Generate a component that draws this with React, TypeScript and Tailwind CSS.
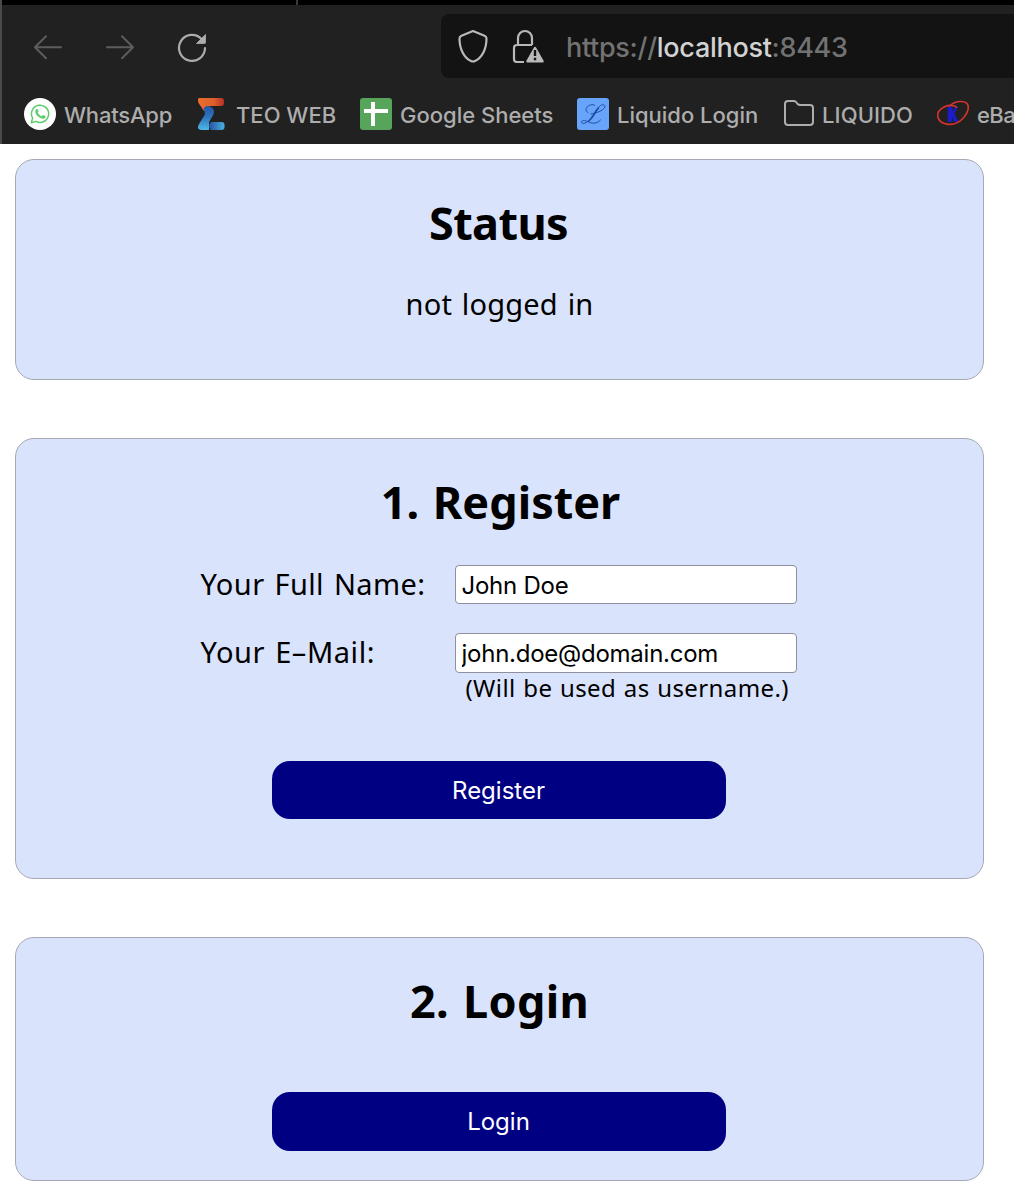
import type { ReactNode } from "react";

function Bookmark({ icon, label, width }: { icon: ReactNode; label: ReactNode; width: string }) {
  return (
    <div className="flex shrink-0 items-center gap-2">
      <div className="h-8 w-8 shrink-0">{icon}</div>
      <span className={`whitespace-nowrap pt-0.5 leading-8 ${width}`}>{label}</span>
    </div>
  );
}

function WhatsAppIcon() {
  return (
    <svg width="32" height="32" viewBox="0 0 32 32" fill="none">
      <circle cx="16" cy="16" r="16" fill="#fff" />
      <path d="M7.3 24.7l1.3-4.6a8.6 8.6 0 1 1 3.4 3.3z" stroke="#5ccb6c" strokeWidth="1.5" strokeLinejoin="round" />
      <path d="M12.2 11.3c.5-.5 1.100-.5 1.400 0l.9 1.900c.1.5-.8 1.200-.7 1.600 1 1.900 2.200 2.900 4 3.500.5 0 1.100-1.300 1.600-1.200l2 1c.4.3 0 1.700-.6 2.100-1.500 1-3.500.6-5.700-.9-1.700-1.200-3.200-3-3.600-4.600-.3-1.300 0-2.600.7-3.400z" fill="#5ccb6c" />
    </svg>
  );
}

function TeoIcon() {
  return (
    <svg width="32" height="32" viewBox="0 0 32 32">
      <defs>
        <linearGradient id="teoTop" x1="0" x2="1">
          <stop offset="0" stopColor="#ea6f2b" />
          <stop offset="0.6" stopColor="#dc602b" />
          <stop offset="1" stopColor="#b93028" />
        </linearGradient>
        <linearGradient id="teoMid" x1="0" x2="0" y1="0" y2="1">
          <stop offset="0" stopColor="#2453a5" />
          <stop offset="0.45" stopColor="#2e73bd" />
          <stop offset="1" stopColor="#4cb8e4" />
        </linearGradient>
        <linearGradient id="teoFoot" x1="0" x2="1">
          <stop offset="0" stopColor="#2552a2" />
          <stop offset="1" stopColor="#48b0df" />
        </linearGradient>
      </defs>
      <path d="M3.500 0H25a3 3 0 0 1 3 3v2a3 3 0 0 1-3 3H14L8 13 2.500 5Q1 0 3.500 0z" fill="url(#teoTop)" />
      <path d="M7.500 11q1-3 4.500-3 6 1 6 6 0 2-2 5l-3 5v8H5q-5-1-2-6l5-8q2-3-.5-7z" fill="url(#teoMid)" />
      <path d="M15 24h10.500a3 3 0 0 1 3 3v2a3 3 0 0 1-3 3H15q-4-4 0-8z" fill="url(#teoFoot)" />
    </svg>
  );
}

function SheetsIcon() {
  return (
    <svg width="32" height="32" viewBox="0 0 32 32">
      <rect width="32" height="32" rx="3" fill="#57a55a" />
      <path d="M11 4h4v7h13v4H15v13h-4V15H4v-4h7z" fill="#fff" />
    </svg>
  );
}

function LiquidoIcon() {
  return (
    <svg width="32" height="32" viewBox="0 0 32 32" fill="none" stroke="#1c4fa5" strokeLinecap="round">
      <rect width="32" height="32" rx="3" fill="#68a5fa" stroke="none" />
      <path d="M11 14.500C7 13 9 7.500 15 6.700c2-.2 3 .2 2.500 1.100M14 16c5-1 12-3 14-7 .5-2-2-3-4.500-1.500C18 11 16 20 10 24c-2.500 1.700-5.500 2-5.500.3 0-2 3-2.300 6-.8 4 2 9 3 13-1.500" strokeWidth="1" />
      <path d="M21.500 10C18 14 16 20 11.500 23.200" strokeWidth="1.600" />
    </svg>
  );
}

function FolderIcon() {
  return (
    <svg width="32" height="32" viewBox="0 0 32 32" fill="none" stroke="#adadad" strokeWidth="2">
      <path d="M3 24V6q0-3 3-3h6q1.500 0 2.500 1.500l1.200 1.500q1 1 2.300 1h10q3 0 3 3v14q0 3-3 3H6q-3 0-3-3z" />
    </svg>
  );
}

function KleinanzeigenIcon() {
  return (
    <svg width="32" height="32" viewBox="0 0 32 32" fill="none">
      <path d="M11 9h4v5.500L18.500 9h2l-3.200 6.500 3.700 8h-3.700L15 18v5.500h-4z" fill="#1c1cc8" stroke="#1c1cc8" strokeWidth=".6" />
      <path d="M12 8.500C19 1.500 31 2 31.300 9c.2 6-7.300 17.500-18.300 17.300C4 26.500 0 21 .7 16 1.500 11 9 7 14 7.500c3 0 5 .500 6 2.300" stroke="#d3342d" strokeWidth="1.700" />
    </svg>
  );
}

function BrowserChrome() {
  return (
    <header className="h-36 overflow-hidden border-l-2 border-[#4a4a4a] bg-[#212121] font-['Inter',sans-serif] font-[450]">
      <div className="flex h-[5px] bg-black">
        <div className="w-[294px]" />
        <div className="w-0.5 bg-[#3a3a3a]" />
      </div>
      <div className="mt-[9px] flex h-16">
        <div className="flex w-[439px] shrink-0 items-center pl-8">
          <svg width="30" height="30" viewBox="0 0 30 30" fill="none" stroke="#5d5d5d" strokeWidth="2" strokeLinecap="round" strokeLinejoin="round">
            <path d="M27 16.300H1.500M12 5.300L1 16.300l11 11" />
          </svg>
          <svg className="ml-[42px]" width="30" height="30" viewBox="0 0 30 30" fill="none" stroke="#5d5d5d" strokeWidth="2" strokeLinecap="round" strokeLinejoin="round">
            <path d="M1 16.300h25.500M16 5.300l11 11-11 11" />
          </svg>
          <svg className="ml-10" width="32" height="32" viewBox="0 0 32 32" fill="none">
            <path d="M29 18A13 13 0 1 1 25.500 9" stroke="#adadad" strokeWidth="2.200" strokeLinecap="round" />
            <path d="M29.500 4.500v8q0 1-1 1H20.500z" fill="#adadad" stroke="#adadad" strokeLinejoin="round" strokeWidth=".8" />
          </svg>
        </div>
        <div className="flex flex-1 items-center rounded-l-lg bg-[#131313] pl-4">
          <svg width="32" height="34" viewBox="0 0 32 34" fill="none" stroke="#b9b9b9" strokeWidth="2.200" strokeLinejoin="round">
            <path d="M16 2l11.500 4.700q2 .8 2 2.800C29.500 20 25 29 18 32q-2 1-4 0C7 29 2.500 20 2.500 9.500q0-2 2-2.800z" />
          </svg>
          <svg className="ml-[22px]" width="34" height="34" viewBox="0 0 34 34" fill="none">
            <path d="M7 16V9a7 7 0 0 1 14 0v7M21 16H6q-3 0-3 3v11q0 3 3 3h7" stroke="#b9b9b9" strokeWidth="2.200" />
            <path d="M24 19l7.500 13.300h-15z" fill="#b9b9b9" stroke="#b9b9b9" strokeWidth="2.500" strokeLinejoin="round" />
            <path d="M24 21v6M24 28.700v2.600" stroke="#131313" strokeWidth="2.400" />
          </svg>
          <div className="ml-[21px] whitespace-nowrap pt-1 text-[27px] leading-8 tracking-[-0.3px] text-[#727272]">
            https://<span className="text-[#d2d2d2]">localhost</span>:8443
          </div>
        </div>
      </div>
      <nav className="mt-[19px] flex gap-6 pl-[22px] text-[22px] text-[#adadad]">
        <Bookmark icon={<WhatsAppIcon />} label="WhatsApp" width="w-[108px] tracking-[-0.2px]" />
        <Bookmark icon={<TeoIcon />} label="TEO WEB" width="w-[100px]" />
        <Bookmark icon={<SheetsIcon />} label="Google Sheets" width="w-[153px]" />
        <Bookmark icon={<LiquidoIcon />} label="Liquido Login" width="w-[141px]" />
        <Bookmark icon={<FolderIcon />} label="LIQUIDO" width="w-[91px] tracking-[0.1px]" />
        <Bookmark icon={<KleinanzeigenIcon />} label="eBa" width="w-[37px] tracking-[-0.6px]" />
      </nav>
    </header>
  );
}

function Card({ title, className, children }: { title: ReactNode; className: string; children: ReactNode }) {
  return (
    <section className={`flex flex-col items-center rounded-[19px] border border-[#a5a9b3] bg-[#d9e3fb] ${className}`}>
      <h2 className="mt-[33px] h-[60px] whitespace-nowrap text-[45px] font-bold leading-[60px]">{title}</h2>
      {children}
    </section>
  );
}

const button = "mr-0.5 flex w-[454px] items-center justify-center rounded-[18px] bg-[#000083] font-['Inter',sans-serif] text-[24px] font-normal text-white";
const field = "w-[342px] rounded-[4px] border border-[#8f8f9d] bg-white pl-1.5 font-['Inter',sans-serif] text-[24px] font-normal tracking-[-0.25px] outline-none";

export default function App() {
  return (
    <div className="h-[1202px] w-[1014px] overflow-hidden bg-white font-['Noto_Sans',sans-serif] text-black">
      <BrowserChrome />
      <main className="ml-[15px] mt-[15px] flex w-[969px] flex-col gap-[58px]">
        <Card title={<span className="pr-0.5 tracking-[-0.6px]">Status</span>} className="h-[221px]">
          <p className="mt-[31px] text-[29px] leading-[40px] tracking-[0.2px] [word-spacing:2px]">not logged in</p>
        </Card>
        <Card title={<span className="pl-0.5 [word-spacing:2px]">1. Register</span>} className="h-[441px]">
          <div className="mr-0.5 mt-[33px] grid w-[596px] grid-cols-[254px_342px] text-[29px]">
            <label className="h-[68px] whitespace-nowrap leading-[38px] tracking-[0.4px] [word-spacing:2px]">Your Full Name:</label>
            <input className={`h-[39px] pt-0.5 ${field}`} defaultValue="John Doe" />
            <label className="whitespace-nowrap leading-[38px] tracking-[0.55px] [word-spacing:2px]">Your E–Mail:</label>
            <div className="flex flex-col">
              <input className={`h-10 pt-px ${field}`} defaultValue="john.doe@domain.com" />
              <span className="-mt-px ml-[11px] whitespace-nowrap text-[24px] leading-8 tracking-[0.4px] [word-spacing:1px]">(Will be used as username.)</span>
            </div>
          </div>
          <button className={`mt-[57px] h-[58px] pt-0.5 ${button}`}>Register</button>
        </Card>
        <Card title={<span className="tracking-[0.3px] [word-spacing:2px]">2. Login</span>} className="h-[244px]">
          <button className={`mt-[61px] h-[59px] ${button}`}>Login</button>
        </Card>
      </main>
    </div>
  );
}
